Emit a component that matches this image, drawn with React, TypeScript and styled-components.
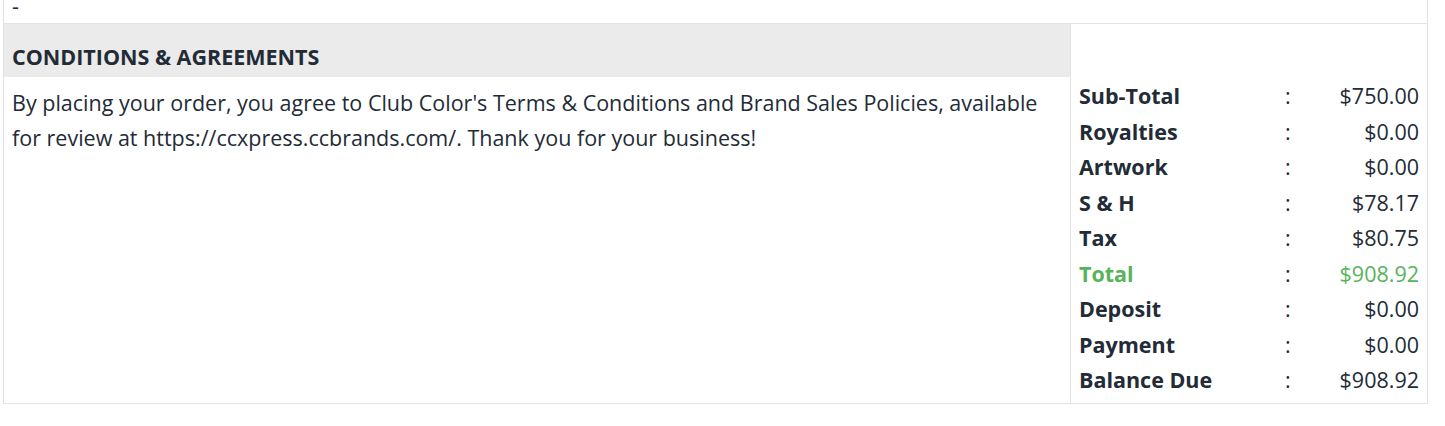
import React from "react";
import styled, { createGlobalStyle } from "styled-components";

const Global = createGlobalStyle`
  html, body { margin: 0; padding: 0; background: #fff; }
  body { font-family: "Open Sans", "Liberation Sans", sans-serif; color: #222b36; }
`;

const Page = styled.div`
  padding-left: 3px;
  width: 1425px;
`;

const Table = styled.div`
  border-left: 1px solid #e1e2e7;
  border-right: 1px solid #e1e2e7;
  border-bottom: 1px solid #e1e2e7;
`;

const TopRow = styled.div`
  height: 23px;
  overflow: hidden;
  border-bottom: 1px solid #e1e2e7;
  padding-left: 8px;
`;

const TopText = styled.div`
  font-size: 21.5px;
  line-height: 35px;
  margin-top: -12px;
`;

const Body = styled.div`
  display: grid;
  grid-template-columns: 1067px 1fr;
`;

const Conditions = styled.div`
  border-right: 1px solid #e1e2e7;
`;

const Heading = styled.div`
  background: #ebebeb;
  height: 53px;
  display: flex;
  align-items: center;
  padding: 12px 8px 0;
  box-sizing: border-box;
  font-size: 21.5px;
  font-weight: 700;
`;

const Text = styled.p`
  margin: 0;
  padding: 8px 8px 0;
  font-size: 21.5px;
  line-height: 35px;
`;

const Totals = styled.div`
  padding: 54px 8px 5px 8px;
  display: grid;
  grid-template-columns: 206px 20px 1fr;
  grid-auto-rows: 35.5px;
  align-items: center;
  font-size: 21.5px;
`;

const Label = styled.div<{ $green?: boolean }>`
  font-weight: 700;
  color: ${(p) => (p.$green ? "#57b45a" : "#222b36")};
`;

const Colon = styled.div`
  text-align: left;
`;

const Value = styled.div<{ $green?: boolean }>`
  text-align: right;
  color: ${(p) => (p.$green ? "#57b45a" : "#222b36")};
`;

const rows: [string, string, boolean?][] = [
  ["Sub-Total", "$750.00"],
  ["Royalties", "$0.00"],
  ["Artwork", "$0.00"],
  ["S & H", "$78.17"],
  ["Tax", "$80.75"],
  ["Total", "$908.92", true],
  ["Deposit", "$0.00"],
  ["Payment", "$0.00"],
  ["Balance Due", "$908.92"],
];

export default function App() {
  return (
    <Page>
      <Global />
      <Table>
        <TopRow>
          <TopText>-</TopText>
        </TopRow>
        <Body>
          <Conditions>
            <Heading>CONDITIONS &amp; AGREEMENTS</Heading>
            <Text>
              By placing your order, you agree to Club Color's Terms &amp; Conditions and Brand Sales Policies, available
              for review at https://ccxpress.ccbrands.com/. Thank you for your business!
            </Text>
          </Conditions>
          <Totals>
            {rows.map(([l, v, g]) => (
              <React.Fragment key={l}>
                <Label $green={g}>{l}</Label>
                <Colon>:</Colon>
                <Value $green={g}>{v}</Value>
              </React.Fragment>
            ))}
          </Totals>
        </Body>
      </Table>
    </Page>
  );
}
